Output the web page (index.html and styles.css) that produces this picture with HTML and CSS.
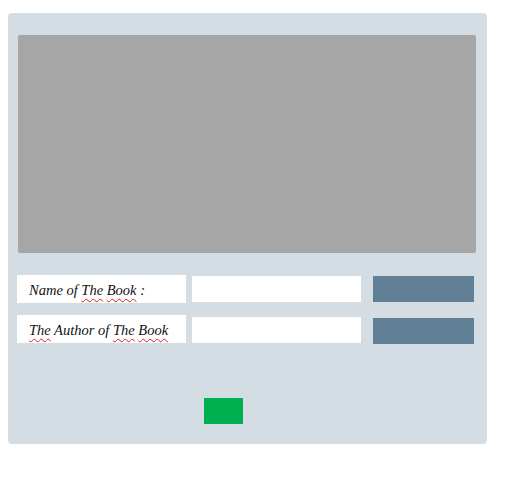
FILE: index.html
```html
<!DOCTYPE html>
<html>
<head>
<meta charset="utf-8">
<link rel="stylesheet" href="styles.css">
</head>
<body>
<div class="panel">
  <div class="preview"></div>
  <div class="form">
    <div class="row row-1">
      <div class="label">Name of <span class="sp">The</span> <span class="sp">Book</span> :</div>
      <div class="input"></div>
      <div class="btn"></div>
    </div>
    <div class="row row-2">
      <div class="label"><span class="sp">The</span> Author of <span class="sp">The</span> <span class="sp">Book</span></div>
      <div class="input"></div>
      <div class="btn"></div>
    </div>
  </div>
  <div class="go"></div>
</div>
</body>
</html>
```
FILE: styles.css
```css
html, body { margin: 0; padding: 0; background: #fff; }
body { padding: 13px 0 0 8px; }
.panel {
  width: 479px;
  height: 431px;
  box-sizing: border-box;
  background: #d5dde4;
  border-radius: 4px;
  padding: 22px 0 0 9px;
}
.preview {
  width: 458px;
  height: 218px;
  margin-left: 1px;
  background: #a6a6a6;
  border-radius: 2px;
}
.form {
  margin-top: 22px;
  display: flex;
  flex-direction: column;
  gap: 12px;
}
.row { display: flex; align-items: flex-start; }
.label {
  width: 169px;
  height: 28px;
  background: #fff;
  box-sizing: border-box;
  padding: 7px 0 0 12px;
  font-family: "Liberation Serif", serif;
  font-style: italic;
  font-size: 14.5px;
  color: #111;
  white-space: nowrap;
}
.sp {
  text-decoration: underline wavy #e02020;
  text-decoration-thickness: 1px;
  text-underline-offset: 3px;
}
.input {
  width: 169px;
  height: 26px;
  background: #fff;
  margin-left: 6px;
  margin-top: 1px;
}
.btn {
  width: 101px;
  height: 26px;
  background: #617f95;
  margin-left: 12px;
  margin-top: 1px;
}
.row-2 .input { margin-top: 2px; }
.row-2 .btn { margin-top: 3px; }
.go {
  width: 39px;
  height: 26px;
  background: #00b050;
  margin: 54px 0 0 187px;
}
```
